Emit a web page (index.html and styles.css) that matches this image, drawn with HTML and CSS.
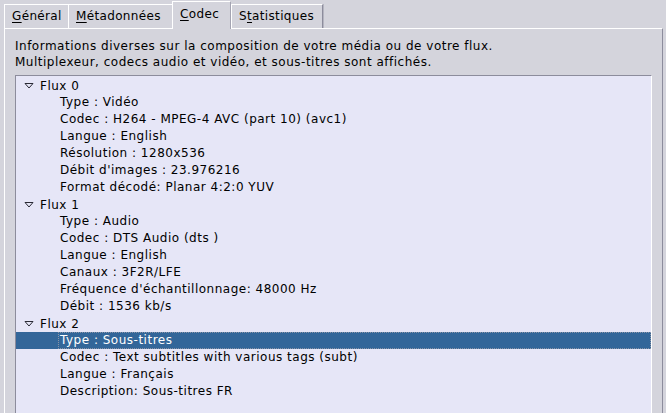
FILE: index.html
```html
<!DOCTYPE html>
<html lang="fr">
<head>
<meta charset="utf-8">
<title>Codec</title>
<link rel="stylesheet" href="styles.css">
</head>
<body>
<div class="window">
  <div class="tabbar">
    <div class="tab tab-general"><u>G</u>énéral</div>
    <div class="tab tab-meta"><u>M</u>étadonnées</div>
    <div class="tab tab-codec active"><u>C</u>odec</div>
    <div class="tab tab-stats last">S<u>t</u>atistiques</div>
  </div>
  <div class="panel">
    <p class="intro">Informations diverses sur la composition de votre média ou de votre flux.<br>Multiplexeur, codecs audio et vidéo, et sous-titres sont affichés.</p>
    <div class="tree">
      <div class="row group"><svg class="arrow" width="10" height="6" viewBox="0 0 10 6"><polygon points="1,0.5 9,0.5 5,5" fill="none" stroke="#2a2a35" stroke-width="1"/></svg><span>Flux 0</span></div>
      <div class="row child"><span class="cell">Type : Vidéo</span></div>
      <div class="row child"><span class="cell">Codec : H264 - MPEG-4 AVC (part 10) (avc1)</span></div>
      <div class="row child"><span class="cell">Langue : English</span></div>
      <div class="row child"><span class="cell">Résolution : 1280x536</span></div>
      <div class="row child"><span class="cell">Débit d'images : 23.976216</span></div>
      <div class="row child"><span class="cell">Format décodé: Planar 4:2:0 YUV</span></div>
      <div class="row group"><svg class="arrow" width="10" height="6" viewBox="0 0 10 6"><polygon points="1,0.5 9,0.5 5,5" fill="none" stroke="#2a2a35" stroke-width="1"/></svg><span>Flux 1</span></div>
      <div class="row child"><span class="cell">Type : Audio</span></div>
      <div class="row child"><span class="cell">Codec : DTS Audio (dts )</span></div>
      <div class="row child"><span class="cell">Langue : English</span></div>
      <div class="row child"><span class="cell">Canaux : 3F2R/LFE</span></div>
      <div class="row child"><span class="cell">Fréquence d'échantillonnage: 48000 Hz</span></div>
      <div class="row child"><span class="cell">Débit : 1536 kb/s</span></div>
      <div class="row group"><svg class="arrow" width="10" height="6" viewBox="0 0 10 6"><polygon points="1,0.5 9,0.5 5,5" fill="none" stroke="#2a2a35" stroke-width="1"/></svg><span>Flux 2</span></div>
      <div class="row child selected"><span class="cell">Type : Sous-titres</span></div>
      <div class="row child"><span class="cell">Codec : Text subtitles with various tags (subt)</span></div>
      <div class="row child"><span class="cell">Langue : Français</span></div>
      <div class="row child"><span class="cell">Description: Sous-titres FR</span></div>
    </div>
  </div>
</div>
</body>
</html>
```
FILE: styles.css
```css
html, body {
  margin: 0;
  padding: 0;
  height: 413px;
  overflow: hidden;
  background: #d4d4dc;
}
body {
  font-family: "DejaVu Sans", "Liberation Sans", sans-serif;
  font-size: 12px;
  letter-spacing: 0.5px;
  color: #000;
}
.window {
  display: flex;
  flex-direction: column;
}
.tabbar {
  display: flex;
  align-items: flex-end;
  height: 28px;
  padding-left: 4px;
}
.tab {
  box-sizing: border-box;
  height: 24px;
  line-height: 23px;
  border-top: 1px solid #fff;
  border-left: 1px solid #fff;
  padding-left: 7px;
  white-space: nowrap;
  background: #d4d4dc;
  letter-spacing: 0.35px;
}
.tab u {
  text-decoration-thickness: 1px;
  text-underline-offset: 2px;
}
.tab-general { width: 64px; }
.tab-meta { width: 104px; }
.tab-codec { width: 59px; }
.tab-stats { width: 92px; }
.tab.last {
  border-right: 1px solid #8c8c9c;
  box-shadow: 1px 0 0 #b4b4c0;
}
.tab.active {
  height: 28px;
  margin-bottom: -1px;
  line-height: 25px;
  padding-bottom: 2px;
  border-right: 1px solid #a4a4b2;
  position: relative;
  z-index: 1;
}
.panel {
  box-sizing: border-box;
  height: 420px;
  margin: 0 3px 0 4px;
  border-top: 1px solid #fff;
  border-left: 1px solid #fff;
  border-right: 1px solid #8c8c9c;
  padding: 9px 10px 0 10px;
}
.intro {
  margin: 0 0 5px 0;
  line-height: 16px;
}
.tree {
  box-sizing: border-box;
  height: 360px;
  background: #e6e6f7;
  border-top: 1px solid #8c8c9c;
  border-left: 1px solid #8c8c9c;
  border-right: 1px solid #fff;
  border-bottom: 1px solid #fff;
  padding-top: 1px;
}
.row {
  height: 17px;
  display: flex;
  align-items: center;
  white-space: nowrap;
}
.row.group {
  padding-left: 8px;
}
.arrow {
  display: block;
  margin-right: 6px;
  margin-top: 1px;
}
.row.child {
  padding-left: 42px;
}
.cell {
  box-sizing: border-box;
  flex: 1;
  height: 17px;
  line-height: 15px;
  border: 1px solid transparent;
  padding-left: 1px;
}
.row.selected {
  background: #336699;
  color: #fff;
}
.row.selected .cell {
  border: 1px dotted #8a94a6;
}
```
